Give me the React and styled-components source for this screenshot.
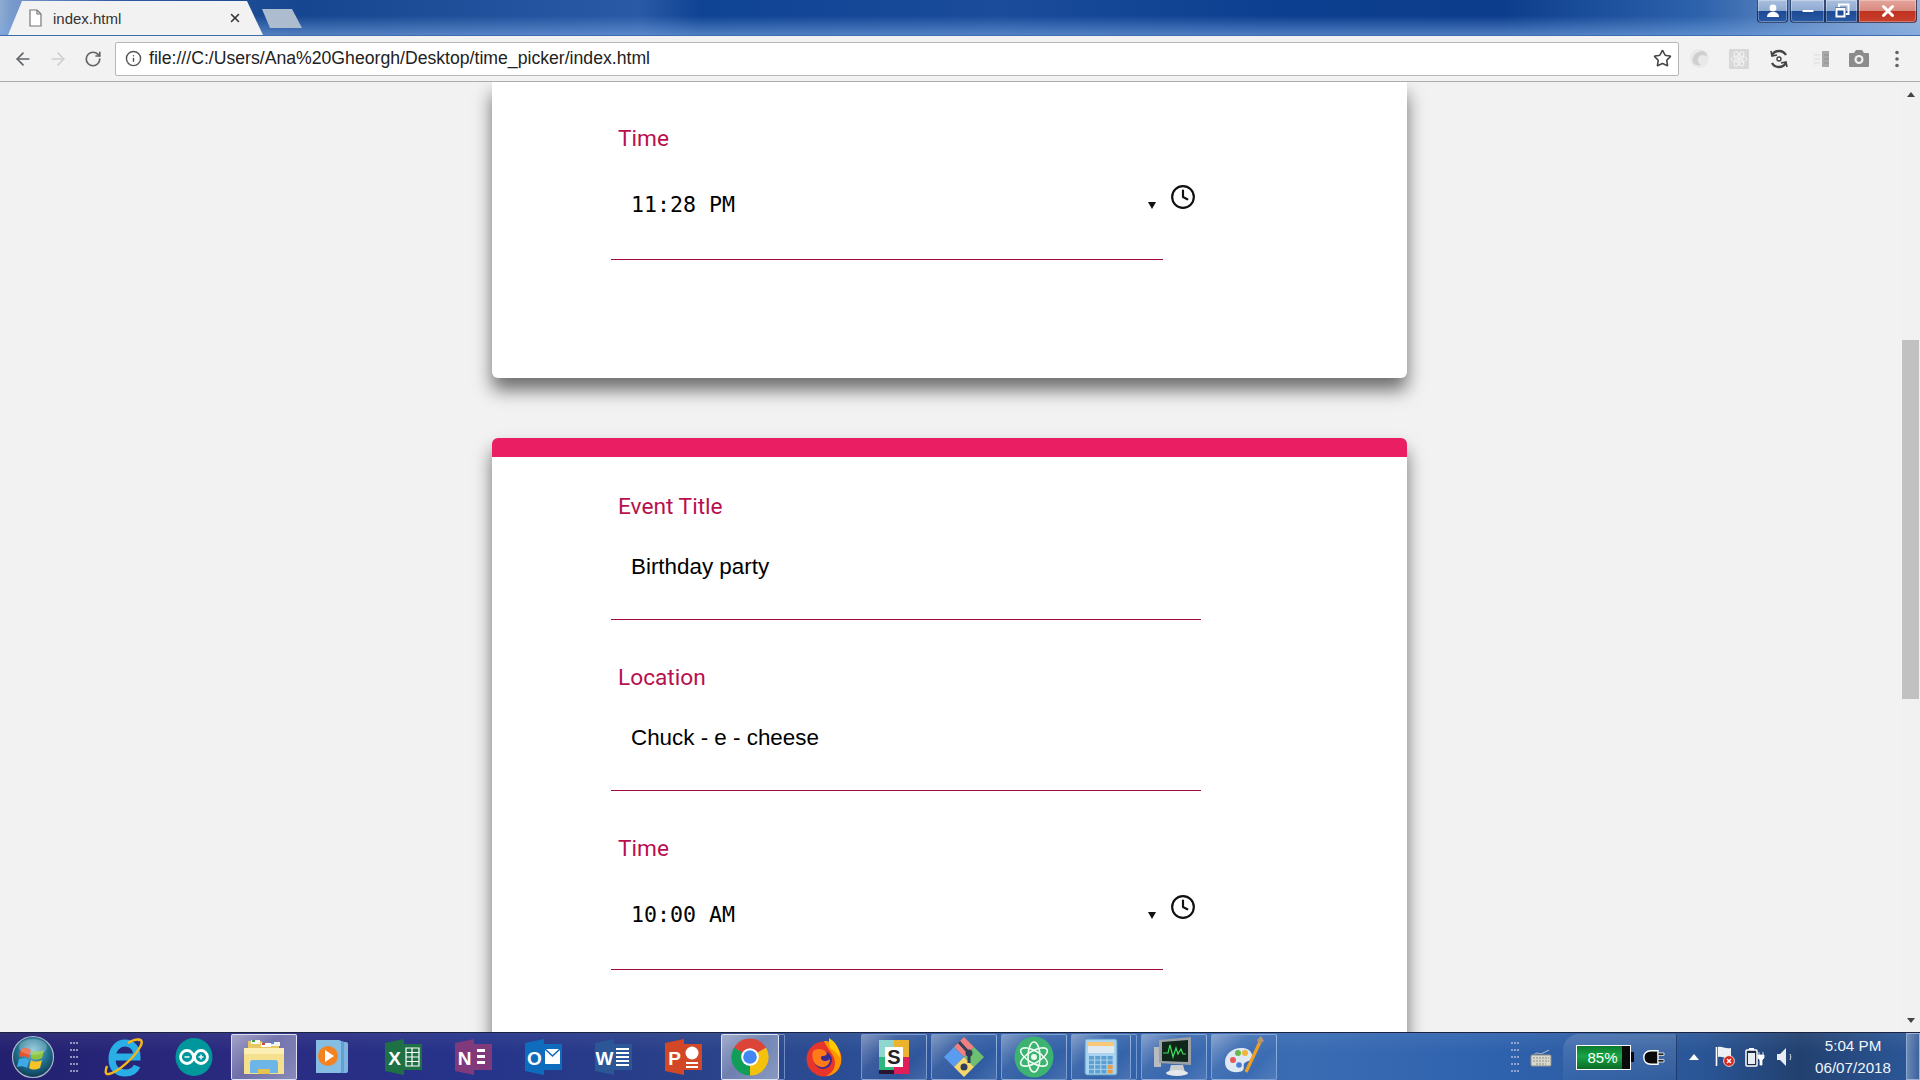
import React from 'react';
import styled, { createGlobalStyle } from 'styled-components';
import { ArrowLeft, ArrowRight, RotateCw, Info, Star, Clock, X, Minus } from 'lucide-react';

const GlobalStyle = createGlobalStyle`
  html, body { margin: 0; padding: 0; height: 100%; overflow: hidden; }
  body { font-family: "Liberation Sans", Arial, sans-serif; }
  * { box-sizing: border-box; }
`;

const Screen = styled.div`
  display: flex;
  flex-direction: column;
  width: 1920px;
  height: 1080px;
  overflow: hidden;
  background: #f2f2f2;
`;

/* ---------- window chrome ---------- */
const TabStrip = styled.div`
  display: flex;
  align-items: flex-end;
  height: 36px;
  flex: none;
  border-bottom: 1px solid #3f6cae;
  background:
    linear-gradient(to bottom, rgba(255,255,255,0) 45%, rgba(120,165,225,.6) 100%),
    linear-gradient(to right, #8eabd2 0, #7a9bcc 10px, #2c5aa3 120px, #16468f 300px, #2a5aa6 640px, #0f4393 700px,
      #1a4c9b 1000px, #0d3f90 1280px, #0c3d8c 1500px, #2d62ac 1700px, #7e9fce 1860px, #98b3d8 1920px);
`;

const Tab = styled.div`
  display: flex;
  align-items: center;
  width: 255px;
  height: 34px;
  margin-left: 8px;
  padding: 0 21px 0 20px;
  background: #f2f2f2;
  clip-path: polygon(0 100%, 14px 0, 239px 0, 255px 100%);
  flex: none;
`;

const TabTitle = styled.span`
  flex: 1;
  margin-left: 10px;
  font-size: 15px;
  color: #333;
`;

const NewTab = styled.div`
  width: 40px;
  height: 19px;
  margin: 0 0 7px -1px;
  background: #aebcd0;
  clip-path: polygon(0 0, 30px 0, 40px 100%, 8px 100%);
  flex: none;
`;

const Spacer = styled.div`
  flex: 1;
`;

const WindowControls = styled.div`
  display: flex;
  align-self: flex-start;
  margin-right: 3px;
`;

const WindowButton = styled.div`
  display: flex;
  align-items: center;
  justify-content: center;
  width: ${p => p.$w}px;
  height: 23px;
  margin-left: ${p => p.$gap || 0}px;
  border: 1px solid rgba(20,40,80,.75);
  border-top: none;
  border-radius: ${p => p.$radius || '0'};
  background: ${p => p.$close
    ? 'linear-gradient(to bottom, #e6a59c 0, #d88a80 48%, #c0321f 52%, #c8402c 100%)'
    : 'linear-gradient(to bottom, #a9bfdf 0, #8ea9d0 48%, #1d4a94 52%, #2a5aa4 100%)'};
  box-shadow: inset 0 0 0 1px rgba(255,255,255,.3);
  color: #fff;
`;

const Toolbar = styled.div`
  display: flex;
  align-items: center;
  flex: none;
  height: 46px;
  padding-left: 5px;
  background: #f2f2f2;
  border-bottom: 1px solid #adadad;
`;

const NavButton = styled.div`
  display: flex;
  align-items: center;
  justify-content: center;
  width: 35px;
  height: 34px;
  color: ${p => (p.$off ? '#cfcfcf' : '#5f6368')};
  flex: none;
`;

const AddressBar = styled.div`
  display: flex;
  align-items: center;
  width: 1564px;
  height: 34px;
  margin-left: 5px;
  padding: 0 6px 0 9px;
  background: #fff;
  border: 1px solid #b7b7b7;
  border-radius: 2px;
  flex: none;
`;

const UrlText = styled.span`
  flex: 1;
  margin-left: 7px;
  font-size: 17.65px;
  color: #222;
  white-space: nowrap;
`;

const ExtensionSlot = styled.div`
  display: flex;
  align-items: center;
  justify-content: center;
  width: ${p => p.$w || 40}px;
  height: 34px;
  flex: none;
`;

/* ---------- page ---------- */
const Viewport = styled.div`
  display: flex;
  flex: 1;
  min-height: 0;
  overflow: hidden;
`;

const Page = styled.div`
  flex: 1;
  height: 100%;
  overflow: hidden;
  padding-left: 492px;
  background: #f2f2f2;
`;

const Card = styled.section`
  width: 915px;
  height: ${p => p.$h}px;
  margin-bottom: 60px;
  padding-left: 119px;
  padding-top: ${p => p.$top}px;
  background: #fff;
  border-radius: ${p => p.$accent ? '6px 6px 0 0' : '0 0 6px 6px'};
  border-top: ${p => p.$accent ? '19px solid #e91e63' : 'none'};
  box-shadow: 0 12px 18px rgba(0,0,0,.55);
`;

const Field = styled.div`
  margin-bottom: 41px;
`;

const Label = styled.div`
  height: 32px;
  padding-left: 7px;
  font-family: Roboto, sans-serif;
  font-size: 22.7px;
  line-height: 34px;
  color: #b8104f;
`;

const TextValue = styled.div`
  width: 590px;
  height: 98px;
  padding: 29px 0 0 20px;
  font-size: 22.4px;
  line-height: 32px;
  color: #000;
  border-bottom: 1px solid #a00a40;
`;

const TimeRow = styled.div`
  display: flex;
  align-items: flex-start;
`;

const TimeInput = styled.div`
  display: flex;
  align-items: center;
  width: 552px;
  height: 106px;
  padding: 34px 7px 0 20px;
  border-bottom: 1px solid #a00a40;
`;

const TimeValue = styled.span`
  flex: 1;
  height: 32px;
  margin-bottom: 37px;
  font-family: "DejaVu Sans Mono", monospace;
  font-size: 21.6px;
  line-height: 32px;
  color: #000;
`;

const DropArrow = styled.span`
  width: 0;
  height: 0;
  margin-bottom: 37px;
  border-left: 4px solid transparent;
  border-right: 4px solid transparent;
  border-top: 7px solid #111;
`;

const ClockSlot = styled.div`
  margin: 30px 0 0 7px;
  width: 26px;
  height: 26px;
  color: #111;
`;

const ScrollTrack = styled.div`
  display: flex;
  flex-direction: column;
  width: 18px;
  flex: none;
  background: #f1f1f1;
`;

const ScrollButton = styled.div`
  display: flex;
  align-items: center;
  justify-content: center;
  height: 24px;
  flex: none;
`;

const ScrollThumb = styled.div`
  height: 359px;
  margin: 234px 1px 0 0;
  background: #c1c1c1;
`;

const ScrollArrow = styled.span`
  width: 0;
  height: 0;
  border-left: 4.5px solid transparent;
  border-right: 4.5px solid transparent;
  border-${p => (p.$down ? 'top' : 'bottom')}: 5px solid #444;
`;

/* ---------- taskbar ---------- */
const Taskbar = styled.div`
  display: flex;
  align-items: stretch;
  flex: none;
  height: 48px;
  border-top: 1px solid #1a2340;
  background:
    linear-gradient(to bottom, rgba(255,255,255,.06), rgba(255,255,255,0) 40%),
    linear-gradient(to right, #23206f 0, #2a2a80 240px, #26348a 480px, #2a4389 720px, #2c5aa2 1000px, #3a6cb4 1300px,
      #2f62ad 1500px, #2a5697 1700px, #22406f 1800px, #2a5594 1900px);
`;

const StartSlot = styled.div`
  display: flex;
  align-items: center;
  width: 91px;
  padding-left: 11px;
  flex: none;
`;

const Gripper = styled.div`
  display: grid;
  grid-template-columns: repeat(3, 2px);
  grid-auto-rows: 2px;
  gap: 5px 1px;
  margin-left: ${p => p.$left}px;
  span { background: rgba(170,180,210,.8); }
`;

const TaskButton = styled.div`
  display: flex;
  align-items: center;
  justify-content: center;
  width: ${p => p.$w || 66}px;
  margin-top: 1px;
  margin-right: ${p => (p.$stacked ? 0 : 4)}px;
  border-radius: 2px;
  flex: none;
  ${p => p.$state === 'open' && `
    border: 1px solid rgba(170,195,235,.55);
    background: linear-gradient(135deg, rgba(255,255,255,.38) 0, rgba(255,255,255,.08) 35%, rgba(255,255,255,.02) 70%, rgba(255,255,255,.12) 100%);
  `}
  ${p => p.$state === 'active' && `
    border: 1px solid rgba(235,240,250,.85);
    background: linear-gradient(135deg, rgba(255,255,255,.55) 0, rgba(255,255,255,.32) 45%, rgba(255,255,255,.45) 100%);
  `}
`;

const StackEdge = styled.div`
  width: 6px;
  margin: 1px ${p => p.$gap}px 0 0;
  border: 1px solid rgba(170,195,235,.55);
  border-left: none;
  border-radius: 0 2px 2px 0;
  flex: none;
`;

const Tray = styled.div`
  display: flex;
  align-items: center;
  margin-left: auto;
  height: 100%;
`;

const BatteryPanel = styled.div`
  display: flex;
  align-items: center;
  align-self: stretch;
  width: 114px;
  margin-left: 1px;
  margin-top: 1px;
  padding-left: 13px;
  border-right: 1px solid rgba(15,35,75,.6);
  border-radius: 16px 0 0 0;
  background: linear-gradient(to bottom, rgba(255,255,255,.14), rgba(255,255,255,.04));
  flex: none;
`;

const BatteryShell = styled.div`
  display: flex;
  width: 55px;
  height: 25px;
  border: 1.5px solid #fff;
  background: #0a0a0a;
  flex: none;
`;

const BatteryFill = styled.div`
  display: flex;
  align-items: center;
  justify-content: center;
  width: 85%;
  padding-left: 6px;
  font-size: 15px;
  color: #fff;
  white-space: nowrap;
  background: linear-gradient(to bottom, #0d7a2e, #17a544 45%, #0b6b27);
`;

const BatteryNub = styled.div`
  width: 3px;
  height: 10px;
  margin-right: 9px;
  background: #0a0a0a;
  flex: none;
`;

const TrayIcon = styled.div`
  display: flex;
  align-items: center;
  justify-content: center;
  width: ${p => p.$w}px;
  flex: none;
`;

const ClockBox = styled.div`
  display: flex;
  flex-direction: column;
  align-items: center;
  width: 90px;
  margin-left: 8px;
  padding-top: 1px;
  font-size: 15.2px;
  line-height: 22px;
  color: #f2f5fa;
  flex: none;
`;

const ShowDesktop = styled.div`
  width: 14px;
  align-self: stretch;
  margin-left: 8px;
  border: 1px solid rgba(200,215,240,.6);
  background: linear-gradient(to right, rgba(255,255,255,.3), rgba(255,255,255,.08));
  flex: none;
`;

/* ---------- drawn icons ---------- */
const DocIcon = () => (
  <svg width="15" height="18" viewBox="0 0 15 18" fill="none" stroke="#777" strokeWidth="1.2">
    <path d="M2 1h7l4 4v12H2z" fill="#fff" />
    <path d="M9 1v4h4" />
  </svg>
);

const Orb = () => (
  <svg width="44" height="44" viewBox="0 0 44 44">
    <defs>
      <radialGradient id="orbFill" cx="50%" cy="35%" r="70%">
        <stop offset="0" stopColor="#7fc4d8" />
        <stop offset=".55" stopColor="#1f6f8c" />
        <stop offset="1" stopColor="#0b2f4a" />
      </radialGradient>
    </defs>
    <circle cx="22" cy="22" r="20.5" fill="url(#orbFill)" stroke="#aeb6c8" strokeWidth="1.2" />
    <path d="M10 14c4-2 7-1 10 1l-2 8c-3-2-6-2-10-1z" fill="#e8552d" />
    <path d="M22 15c3 2 7 2 11 0l-2 8c-4 2-8 2-11 0z" fill="#8cc63f" />
    <path d="M8 24c4-1 7-1 10 1l-2 8c-3-2-7-2-10-1z" fill="#3fa9e8" />
    <path d="M20 25c3 2 7 2 11 0l-2 8c-4 2-8 2-11 0z" fill="#f7c325" />
    <ellipse cx="22" cy="12" rx="14" ry="8" fill="#fff" opacity=".22" />
  </svg>
);

const IeIcon = () => (
  <svg width="40" height="42" viewBox="0 0 40 42" fill="none">
    <path d="M11 21h22c0-9-5-14-12-14S8 13 8 23s6 14 13 14c5 0 10-2 12-7" stroke="#29aee6" strokeWidth="7" />
    <path d="M34 4c4-1 5 2 2 7C30 22 14 36 5 38c-4 1-4-3-2-8" stroke="#f4b71c" strokeWidth="2.4" />
    <path d="M24 7c5-3 10-4 12-3" stroke="#f4b71c" strokeWidth="2.4" />
  </svg>
);

const ArduinoIcon = () => (
  <svg width="38" height="38" viewBox="0 0 38 38" fill="none">
    <ellipse cx="19" cy="19" rx="18.5" ry="19" fill="#00979c" />
    <circle cx="12" cy="19" r="6.5" stroke="#fff" strokeWidth="2.8" />
    <circle cx="26" cy="19" r="6.5" stroke="#fff" strokeWidth="2.8" />
    <path d="M9.5 19h5M23.5 19h5M26 16.5v5" stroke="#fff" strokeWidth="1.4" />
  </svg>
);

const FolderIcon = () => (
  <svg width="42" height="40" viewBox="0 0 42 40">
    <path d="M5 4h13l3 3h15v8H5z" fill="#e8c860" />
    <rect x="8" y="3" width="9" height="4" fill="#f6f6f0" />
    <rect x="18" y="6" width="10" height="4" fill="#fff" />
    <rect x="28" y="5" width="9" height="4" fill="#f3f3ee" />
    <rect x="9" y="3" width="3" height="2" fill="#3fa04a" />
    <rect x="19" y="6" width="3" height="2" fill="#d8453a" />
    <rect x="28" y="5" width="3" height="2" fill="#4c8cd8" />
    <path d="M1 11h40v26H1z" fill="#f5e08f" />
    <path d="M1 11h40v6H1z" fill="#fbeeb2" />
    <path d="M7 36V26c0-2 1-3 3-3h22c2 0 3 1 3 3v10H27v-4H15v4z" fill="#6cb5e6" />
    <rect x="15" y="32" width="12" height="5" fill="#e6c24e" />
  </svg>
);

const WmpIcon = () => (
  <svg width="36" height="36" viewBox="2 0 36 36">
    <rect x="9" y="3" width="25" height="31" rx="2" fill="#7fb4dc" />
    <rect x="5" y="2" width="25" height="32" rx="2" fill="#5fa0d6" />
    <rect x="1" y="1" width="26" height="33" rx="2" fill="#86bde2" />
    <circle cx="14" cy="17" r="10" fill="#f58220" />
    <path d="M11 11l9 6-9 6z" fill="#fff" />
  </svg>
);

const OfficeIcon = ({ color, letter, kind }) => (
  <svg width="38" height="36" viewBox="0 0 38 36">
    <rect x="17" y="5" width="20" height="26" fill={color} />
    <path d="M0 4L19 0v36L0 32z" fill={color} />
    {kind === 'grid' && (
      <path d="M21 9h13v18H21zM21 13.5h13M21 18h13M21 22.5h13M27 9v18" fill="none" stroke="#fff" strokeWidth="1.2" />
    )}
    {kind === 'tabs' && (
      <path d="M22 10h8v3h-8zM22 16h8v3h-8zM22 22h8v3h-8z" fill="#fff" />
    )}
    {kind === 'mail' && (
      <g>
        <rect x="20" y="10" width="15" height="15" fill="#fff" />
        <path d="M20 10l7.5 7 7.5-7" fill="none" stroke={color} strokeWidth="1.6" />
      </g>
    )}
    {kind === 'lines' && (
      <path d="M21 10h13M21 14h13M21 18h13M21 22h13M21 26h13" stroke="#fff" strokeWidth="2" />
    )}
    {kind === 'pie' && (
      <g>
        <circle cx="27" cy="14" r="6.5" fill="#fff" />
        <path d="M21 24h12M21 28h12" stroke="#fff" strokeWidth="2" />
      </g>
    )}
    <text x="9.5" y="25.5" textAnchor="middle" fontFamily="Liberation Sans, sans-serif" fontWeight="700" fontSize="19" fill="#fff">{letter}</text>
  </svg>
);

const ChromeIcon = () => (
  <svg width="38" height="38" viewBox="0 0 38 38">
    <path d="M19 19L3 9.7A18.5 18.5 0 0 1 35 9.7z" fill="#db4437" />
    <path d="M19 19L3 9.7A18.5 18.5 0 0 0 19 37.5z" fill="#0f9d58" />
    <path d="M19 19l16-9.3A18.5 18.5 0 0 1 19 37.5z" fill="#f4c20d" />
    <circle cx="19" cy="19" r="8.8" fill="#fff" />
    <circle cx="19" cy="19" r="6.8" fill="#4285f4" />
  </svg>
);

const FirefoxIcon = () => (
  <svg width="38" height="40" viewBox="0 0 38 40">
    <circle cx="19" cy="22" r="17.5" fill="#e8352c" />
    <path d="M19 4C30 4 38 14 36 26c-2 8-8 13-15 13 9-4 11-13 7-20-2-5-6-8-9-15z" fill="#ff9500" />
    <path d="M24 1c7 4 11 11 11 20-3-5-6-8-10-10-1-4-1-7-1-10z" fill="#ffcb00" />
    <circle cx="18" cy="23" r="9" fill="#3e2a8c" />
    <path d="M8 14c5-3 9-2 12 0 3 2 2 5-2 5-2 0-3 2-1 4 2 2 6 1 8-1 0 5-4 9-9 8-7-1-10-9-8-16z" fill="#ff7b1a" />
  </svg>
);

const SlackIcon = () => (
  <svg width="34" height="36" viewBox="0 0 34 36">
    <rect x="2" y="1" width="15" height="17" fill="#8fd6cf" />
    <rect x="17" y="1" width="15" height="17" fill="#ecb32e" />
    <rect x="2" y="18" width="15" height="17" fill="#2eb67d" />
    <rect x="17" y="18" width="15" height="17" fill="#e01e5a" />
    <rect x="2" y="31" width="15" height="4" fill="#2a1530" />
    <rect x="8" y="8" width="18" height="20" fill="#fff" />
    <text x="17" y="25" textAnchor="middle" fontFamily="Liberation Sans, sans-serif" fontWeight="700" fontSize="20" fill="#222">S</text>
  </svg>
);

const DiamondIcon = () => (
  <svg width="42" height="42" viewBox="0 0 42 42">
    <path d="M21 1l10 10-10 10-10-10z" fill="#f08080" />
    <path d="M11 11l10 10-10 10L1 21z" fill="#5a9df0" />
    <path d="M31 11l10 10-10 10-10-10z" fill="#6cc070" />
    <path d="M21 21l10 10-10 10-10-10z" fill="#f5d76e" />
    <path d="M16 6l10 11M26 17v10M21 27h0" stroke="#2f3e5c" strokeWidth="3" fill="none" />
    <circle cx="26" cy="17" r="3.5" fill="#2f3e5c" />
    <circle cx="21" cy="31" r="3.5" fill="#2f3e5c" />
  </svg>
);

const AtomIcon = () => (
  <svg width="40" height="42" viewBox="0 0 40 42" fill="none" stroke="#eefcf2" strokeWidth="1.6">
    <ellipse cx="20" cy="21" rx="19.5" ry="20.5" fill="#3cb371" stroke="none" />
    <ellipse cx="20" cy="21" rx="6" ry="15" />
    <ellipse cx="20" cy="21" rx="6" ry="15" transform="rotate(60 20 21)" />
    <ellipse cx="20" cy="21" rx="6" ry="15" transform="rotate(-60 20 21)" />
    <circle cx="20" cy="21" r="2.2" fill="#eefcf2" />
  </svg>
);

const CalcIcon = () => (
  <svg width="34" height="38" viewBox="0 0 34 38">
    <rect x="1" y="1" width="32" height="36" rx="2" fill="#a9d3ee" stroke="#5d93bd" />
    <rect x="4" y="4" width="26" height="9" fill="#f7c877" />
    <rect x="4" y="8" width="26" height="7" fill="#dfe9f2" />
    {[0, 1, 2, 3].map(r => [0, 1, 2, 3].map(c => (
      <rect key={`${r}-${c}`} x={5 + c * 6.2} y={18 + r * 4.6} width="5" height="3.6" fill={c === 3 && r > 1 ? '#f09a3e' : '#5c9fd0'} />
    )))}
  </svg>
);

const MonitorIcon = () => (
  <svg width="42" height="40" viewBox="0 0 42 40">
    <rect x="1" y="10" width="7" height="20" fill="#b8bcc0" />
    <path d="M6 3l32-3v28L6 26z" fill="#9aa0a5" />
    <path d="M9 5l26-2v22L9 24z" fill="#10261a" />
    <path d="M10 16h5l2-8 3 12 3-9 2 6 3-5 2 5h3" fill="none" stroke="#3ee05a" strokeWidth="1.2" />
    <path d="M18 28h12l2 7H16z" fill="#c9cdd0" />
    <ellipse cx="24" cy="36" rx="11" ry="3" fill="#e6e8ea" />
  </svg>
);

const PaletteIcon = () => (
  <svg width="42" height="42" viewBox="0 0 42 42">
    <path d="M2 26c0-9 9-15 18-14 8 1 11 7 8 11-2 3-6 2-7 5-1 3 1 5-2 7-3 2-17 3-17-9z" fill="#dfe9f3" />
    <circle cx="10" cy="24" r="3" fill="#e85a5a" />
    <circle cx="15" cy="17" r="3" fill="#67b84f" />
    <circle cx="22" cy="17" r="3" fill="#f0b437" />
    <circle cx="16" cy="29" r="2.8" fill="#4c7fd0" />
    <path d="M37 6L23 36" stroke="#f0a020" strokeWidth="3.2" />
    <path d="M36 8l-2-4 4-4 3 5z" fill="#b89770" />
  </svg>
);

const SwirlIcon = () => (
  <svg width="21" height="21" viewBox="0 0 21 21" fill="none">
    <circle cx="10.5" cy="10.5" r="9.5" fill="#e9e9e9" />
    <path d="M4 15C2 9 7 3 14 3c3 1 4 3 4 6-2-2-5-3-7-1-3 2-3 6 1 9-3 1-6 0-8-2z" fill="#cfcfcf" />
  </svg>
);

const ReactIcon = () => (
  <svg width="20" height="20" viewBox="0 0 20 20" fill="none" stroke="#f3f3f3" strokeWidth=".9">
    <rect width="20" height="20" rx="1" fill="#d8d8d8" stroke="none" />
    <ellipse cx="10" cy="10" rx="8" ry="3" />
    <ellipse cx="10" cy="10" rx="8" ry="3" transform="rotate(60 10 10)" />
    <ellipse cx="10" cy="10" rx="8" ry="3" transform="rotate(-60 10 10)" />
    <circle cx="10" cy="10" r="1.4" fill="#f3f3f3" />
  </svg>
);

const SyncIcon = () => (
  <svg width="20" height="20" viewBox="0 0 20 20" fill="none" stroke="#444" strokeWidth="2.4">
    <path d="M17 6A8 8 0 0 0 3.2 5.8" />
    <path d="M3 14a8 8 0 0 0 13.8.2" />
    <path d="M2 2l1 5 5-1M18 18l-1-5-5 1" strokeWidth="1.6" />
    <circle cx="10" cy="10" r="2" strokeWidth="1.4" />
  </svg>
);

const ListIcon = () => (
  <svg width="20" height="16" viewBox="-3 0 20 16">
    <rect width="10" height="16" fill="#f0f0f0" />
    <rect x="10" width="10" height="16" fill="#a8a8a8" />
    <path d="M2 4h6M2 8h6M2 12h6" stroke="#dcdcdc" />
    <path d="M12 4h6M12 8h6M12 12h6" stroke="#8f8f8f" />
  </svg>
);

const CameraIcon = () => (
  <svg width="20" height="17" viewBox="0 0 20 17">
    <path d="M1 3h4l2-3h6l2 3h4a1 1 0 0 1 1 1v12a1 1 0 0 1-1 1H1a1 1 0 0 1-1-1V4a1 1 0 0 1 1-1z" fill="#8c8c8c" />
    <circle cx="10" cy="9.5" r="4.5" fill="#f2f2f2" />
    <circle cx="10" cy="9.5" r="2.4" fill="#8c8c8c" />
  </svg>
);

const DotsIcon = () => (
  <svg width="6" height="18" viewBox="0 0 6 18" fill="#5f6368">
    <circle cx="3" cy="2.5" r="1.8" />
    <circle cx="3" cy="9" r="1.8" />
    <circle cx="3" cy="15.5" r="1.8" />
  </svg>
);

const UserIcon = () => (
  <svg width="14" height="14" viewBox="0 0 14 14" fill="#fff">
    <circle cx="7" cy="4" r="3.4" />
    <path d="M1 13c0-3 2-5 6-5s6 2 6 5z" />
  </svg>
);

const RestoreIcon = () => (
  <svg width="16" height="16" viewBox="0 0 16 16" fill="none" stroke="#fff" strokeWidth="2">
    <path d="M5 4V1.5h9.5V11H12" />
    <rect x="1.5" y="5" width="10" height="9.5" stroke="#37506f" strokeWidth="1" />
    <rect x="2.5" y="6" width="8" height="7.5" />
  </svg>
);

const KeyboardIcon = () => (
  <svg width="22" height="20" viewBox="0 0 22 20">
    <path d="M4 8c2-4 6 0 9-2 2-1 4-2 6-3" fill="none" stroke="#b5bcc6" />
    <rect x="1" y="8" width="20" height="11" rx="1" fill="#d8d8cf" stroke="#8d8d85" />
    <path d="M3 11h16M3 14h16M6 17h10" stroke="#8d8d85" strokeDasharray="2 1" />
  </svg>
);

const PlugIcon = () => (
  <svg width="22" height="15" viewBox="0 0 22 15">
    <path d="M8 .8h7v13.4H8C3 14.2.8 11 .8 7.5S3 .8 8 .8z" fill="#0a0a0a" stroke="#fff" strokeWidth="1.4" />
    <path d="M15 3h6v2.4h-6zM15 9.6h6V12h-6z" fill="#0a0a0a" stroke="#fff" strokeWidth=".8" />
  </svg>
);

const UpArrowIcon = () => (
  <svg width="10" height="6" viewBox="0 0 10 6" fill="#fff"><path d="M5 0l5 6H0z" /></svg>
);

const FlagIcon = () => (
  <svg width="20" height="21" viewBox="0 0 20 21">
    <path d="M1.5 1v19" stroke="#fff" strokeWidth="1.6" />
    <path d="M3 1c4-1 7 2 13 1v10c-5 1-9-2-13-1z" fill="#eef2f6" />
    <circle cx="14" cy="15" r="5.4" fill="#d8261d" stroke="#fff" strokeWidth=".8" />
    <path d="M12 13l4 4M16 13l-4 4" stroke="#fff" strokeWidth="1.5" />
  </svg>
);

const BatteryPlugIcon = () => (
  <svg width="20" height="20" viewBox="0 0 20 20">
    <rect x="1" y="3" width="11" height="16" rx="1" fill="#1b2a44" stroke="#fff" strokeWidth="1.5" />
    <rect x="4" y="1" width="5" height="2" fill="#fff" />
    <rect x="3" y="6" width="7" height="11" fill="#e8edf4" />
    <path d="M14 5v3M18 5v3M13 8h6v3l-2 2v5h-2v-5l-2-2z" stroke="#fff" fill="#fff" strokeWidth=".8" />
  </svg>
);

const SpeakerIcon = () => (
  <svg width="18" height="20" viewBox="0 0 18 20">
    <path d="M1 7h3l6-6v18l-6-6H1z" fill="#e8edf4" />
    <path d="M14 7c1 2 1 4 0 6" stroke="#dfe6ef" fill="none" />
  </svg>
);

const taskItems = [
  { key: 'ie', icon: <IeIcon /> },
  { key: 'arduino', icon: <ArduinoIcon /> },
  { key: 'folder', icon: <FolderIcon />, state: 'active' },
  { key: 'wmp', icon: <WmpIcon /> },
  { key: 'excel', icon: <OfficeIcon color="#1e7145" letter="X" kind="grid" /> },
  { key: 'onenote', icon: <OfficeIcon color="#80397b" letter="N" kind="tabs" /> },
  { key: 'outlook', icon: <OfficeIcon color="#0f6cbd" letter="O" kind="mail" /> },
  { key: 'word', icon: <OfficeIcon color="#2b5797" letter="W" kind="lines" /> },
  { key: 'ppt', icon: <OfficeIcon color="#d24726" letter="P" kind="pie" /> },
  { key: 'chrome', icon: <ChromeIcon />, state: 'active', w: 58, stacked: 6 },
  { key: 'firefox', icon: <FirefoxIcon /> },
  { key: 'slack', icon: <SlackIcon />, state: 'open' },
  { key: 'diamond', icon: <DiamondIcon />, state: 'open' },
  { key: 'atom', icon: <AtomIcon />, state: 'open' },
  { key: 'calc', icon: <CalcIcon />, state: 'open', w: 60, stacked: 4 },
  { key: 'monitor', icon: <MonitorIcon />, state: 'open' },
  { key: 'palette', icon: <PaletteIcon />, state: 'open' },
];

const TimeField = ({ value }) => (
  <Field>
    <Label>Time</Label>
    <TimeRow>
      <TimeInput>
        <TimeValue>{value}</TimeValue>
        <DropArrow />
      </TimeInput>
      <ClockSlot><Clock size={26} strokeWidth={2} /></ClockSlot>
    </TimeRow>
  </Field>
);

const TextField = ({ label, value }) => (
  <Field>
    <Label>{label}</Label>
    <TextValue>{value}</TextValue>
  </Field>
);

const GripDots = ({ left }) => (
  <Gripper $left={left}>
    {Array.from({ length: 15 }, (_, i) => <span key={i} />)}
  </Gripper>
);

export default function App() {
  return (
    <Screen>
      <GlobalStyle />
      <TabStrip>
        <Tab>
          <DocIcon />
          <TabTitle>index.html</TabTitle>
          <X size={14} strokeWidth={2.6} color="#333" />
        </Tab>
        <NewTab />
        <Spacer />
        <WindowControls>
          <WindowButton $w={31} $radius="0 0 4px 4px"><UserIcon /></WindowButton>
          <WindowButton $w={35} $gap={2} $radius="0 0 0 4px"><Minus size={16} strokeWidth={3} /></WindowButton>
          <WindowButton $w={33}><RestoreIcon /></WindowButton>
          <WindowButton $w={59} $close $radius="0 0 4px 0"><X size={18} strokeWidth={4} /></WindowButton>
        </WindowControls>
      </TabStrip>

      <Toolbar>
        <NavButton><ArrowLeft size={20} strokeWidth={2} /></NavButton>
        <NavButton $off><ArrowRight size={20} strokeWidth={2} /></NavButton>
        <NavButton><RotateCw size={18} strokeWidth={2.2} /></NavButton>
        <AddressBar>
          <Info size={17} color="#555" strokeWidth={2} />
          <UrlText>file:///C:/Users/Ana%20Gheorgh/Desktop/time_picker/index.html</UrlText>
          <Star size={19} color="#444" strokeWidth={2} />
        </AddressBar>
        <ExtensionSlot><SwirlIcon /></ExtensionSlot>
        <ExtensionSlot><ReactIcon /></ExtensionSlot>
        <ExtensionSlot><SyncIcon /></ExtensionSlot>
        <ExtensionSlot><ListIcon /></ExtensionSlot>
        <ExtensionSlot><CameraIcon /></ExtensionSlot>
        <ExtensionSlot $w={36}><DotsIcon /></ExtensionSlot>
      </Toolbar>

      <Viewport>
        <Page>
          <Card $h={296} $top={40}>
            <TimeField value="11:28 PM" />
          </Card>
          <Card $h={700} $top={33} $accent>
            <TextField label="Event Title" value="Birthday party" />
            <TextField label="Location" value="Chuck - e - cheese" />
            <TimeField value="10:00 AM" />
          </Card>
        </Page>
        <ScrollTrack>
          <ScrollButton><ScrollArrow /></ScrollButton>
          <ScrollThumb />
          <Spacer />
          <ScrollButton><ScrollArrow $down /></ScrollButton>
        </ScrollTrack>
      </Viewport>

      <Taskbar>
        <StartSlot>
          <Orb />
          <GripDots left={15} />
        </StartSlot>
        {taskItems.map(item => (
          <React.Fragment key={item.key}>
            <TaskButton $state={item.state} $w={item.w} $stacked={item.stacked}>{item.icon}</TaskButton>
            {item.stacked && <StackEdge $gap={item.stacked} />}
          </React.Fragment>
        ))}
        <Tray>
          <GripDots left={0} />
          <TrayIcon $w={43}><KeyboardIcon /></TrayIcon>
          <BatteryPanel>
            <BatteryShell><BatteryFill>85%</BatteryFill></BatteryShell>
            <BatteryNub />
            <PlugIcon />
          </BatteryPanel>
          <TrayIcon $w={33}><UpArrowIcon /></TrayIcon>
          <TrayIcon $w={30}><FlagIcon /></TrayIcon>
          <TrayIcon $w={30}><BatteryPlugIcon /></TrayIcon>
          <TrayIcon $w={30}><SpeakerIcon /></TrayIcon>
          <ClockBox>
            <span>5:04 PM</span>
            <span>06/07/2018</span>
          </ClockBox>
          <ShowDesktop />
        </Tray>
      </Taskbar>
    </Screen>
  );
}
